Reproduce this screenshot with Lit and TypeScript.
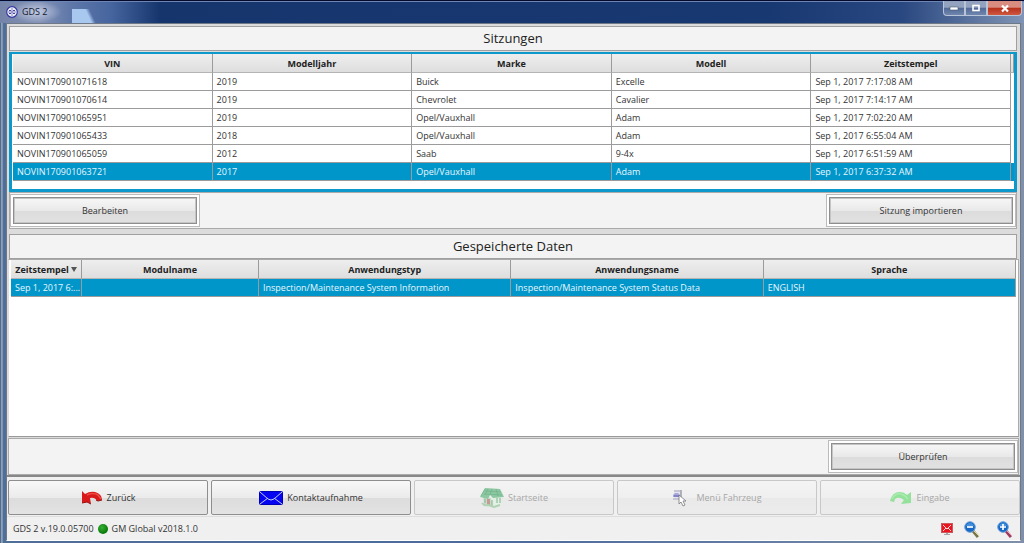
import { LitElement, html, css, svg } from "lit";
import { customElement } from "lit/decorators.js";
import { classMap } from "lit/directives/class-map.js";

const sessions = [
  ["NOVIN170901071618", "2019", "Buick", "Excelle", "Sep 1, 2017 7:17:08 AM"],
  ["NOVIN170901070614", "2019", "Chevrolet", "Cavalier", "Sep 1, 2017 7:14:17 AM"],
  ["NOVIN170901065951", "2019", "Opel/Vauxhall", "Adam", "Sep 1, 2017 7:02:20 AM"],
  ["NOVIN170901065433", "2018", "Opel/Vauxhall", "Adam", "Sep 1, 2017 6:55:04 AM"],
  ["NOVIN170901065059", "2012", "Saab", "9-4x", "Sep 1, 2017 6:51:59 AM"],
  ["NOVIN170901063721", "2017", "Opel/Vauxhall", "Adam", "Sep 1, 2017 6:37:32 AM"],
];
const sessionHeads = ["VIN", "Modelljahr", "Marke", "Modell", "Zeitstempel"];
const dataHeads = ["Modulname", "Anwendungstyp", "Anwendungsname", "Sprache"];

const backIcon = svg`<svg width="22" height="14" viewBox="0 0 22 14"><path d="M1 0L4 3Q9 0 14 1Q21 3 21 9L16 10Q14 6 9 7L10 13L6 11L1 12Z" fill="#d8191c"/><path d="M6 4Q12 1 17 4L20 8" fill="none" stroke="#ee4a42" stroke-width="1.5"/><path d="M1 12L6 11L10 13M15 9L17 10L21 9" fill="none" stroke="#971012"/></svg>`;
const mailIcon = svg`<svg width="24" height="14" viewBox="0 0 24 14"><rect x=".5" y=".5" width="23" height="13" rx="1" fill="#0505f2" stroke="#0000b4"/><path d="M1 1L9 8Q12 10 15 8L23 1M1 13L9 7M23 13L15 7" fill="none" stroke="#c3cdfc"/></svg>`;
const homeIcon = svg`<svg width="24" height="22" viewBox="0 0 24 22"><path d="M3 9L11 11L13 19L4 17Z" fill="#c9d9cc"/><path d="M11 11L21 8L22 17L13 20Z" fill="#e4f0e4"/><path d="M0 10L5 1L20 2L24 10L13 11L10 8L8 12Z" fill="#8cc8a1"/><path d="M5 2L1 9M8 2L5 8M12 2L10 7M16 2L18 9M5 4L21 5M4 7L22 8" stroke="#71b28a" stroke-width=".7"/><path d="M7 12H10V18H7Z" fill="#c69c92"/><path d="M5 12V16M12 13V19M17 11V16M20 11V16" stroke="#8dbb9d" stroke-width="1.2"/><path d="M2 16Q4 19 8 18L14 20L20 18" stroke="#b0d3b3" stroke-width="2" fill="none"/></svg>`;
const menuIcon = svg`<svg width="16" height="18" viewBox="0 0 16 18"><path d="M2 1H9V10H2Z" fill="#e5e5ed"/><path d="M2 2H8M1 10H7" stroke="#a4a4ba"/><path d="M9 1V9" stroke="#777784"/><path d="M1 6L3 4H6L8 6V8H1Z" fill="#a8a8dc"/><path d="M2 7H8" stroke="#5f5fb8"/><path d="M7 6V15L9 13L11 17L13 16L11 12H14Z" fill="#fff" stroke="#77777c" stroke-width=".8"/></svg>`;
const enterIcon = svg`<svg width="22" height="14" viewBox="0 0 22 14"><path d="M0 10Q2 1 10 1Q14 1 17 4L21 1V12L11 13L14 9Q9 5 5 8L4 11Z" fill="#93e19a"/><path d="M2 8Q5 2 11 3Q15 4 18 8" fill="none" stroke="#a9edae" stroke-width="1.5"/></svg>`;
const logo = svg`<svg width="12" height="12" viewBox="0 0 12 12"><circle cx="6" cy="6" r="5.3" fill="#f0f0fb" stroke="#3737a0" stroke-width="1.2"/><path d="M2 6H10M6 2V10" stroke="#6a6ab4" stroke-width=".8"/><path d="M3 4H5V5H3ZM7 4H9V5H7ZM3 7H5V8H3ZM7 7H9V8H7Z" fill="#45459c"/></svg>`;
const monitorIcon = svg`<svg width="12" height="13" viewBox="0 0 12 13"><rect x=".5" y=".5" width="11" height="9" fill="#e9151f" stroke="#c85a5f"/><path d="M2 2L6 6L10 2M2 8L5 5M10 8L7 5" fill="none" stroke="#ffd4d4"/><path d="M5 10H7V11H9V12H3V11H5Z" fill="#a5a5a5"/></svg>`;
const lens = (plus: boolean) => svg`<svg width="16" height="17" viewBox="0 0 16 17"><path d="M9 10L14 16" stroke="${plus ? "#9d3c5c" : "#77764a"}" stroke-width="3"/><path d="M10 10L15 15" stroke="${plus ? "#e6a2bb" : "#d9d79a"}"/><circle cx="6" cy="6" r="5.3" fill="#1768c4" stroke="#6b9fdb"/><path d="M2 5Q3 2 6 2Q9 2 10 5Z" fill="#438fdd"/><path d="M3 6H9${plus ? "M6 3V9" : ""}" stroke="#fff" stroke-width="1.7"/></svg>`;

const actions = [
  { label: "Zurück", icon: backIcon, off: false },
  { label: "Kontaktaufnahme", icon: mailIcon, off: false },
  { label: "Startseite", icon: homeIcon, off: true },
  { label: "Menü Fahrzeug", icon: menuIcon, off: true },
  { label: "Eingabe", icon: enterIcon, off: true },
];

@customElement("app-root")
export class AppRoot extends LitElement {
  static styles = css`
    :host {
      display: flex;
      flex-direction: column;
      box-sizing: border-box;
      height: 100vh;
      padding: 0 3px 2px 6px;
      background: linear-gradient(90deg, #39506f 0, #a9bcd4 2px, #4f6f98 3px, #4a6c9c 50%, #8090aa 100%);
      font: 9px/12px "Open Sans", "Noto Sans", sans-serif;
      color: #333;
    }
    * { box-sizing: border-box; }
    svg { display: block; flex: none; }
    button { font: inherit; color: inherit; margin: 0; }
    .titlebar {
      flex: none;
      height: 23px;
      margin: 0 -3px 0 -6px;
      padding: 1px 2px 0 6px;
      display: flex;
      justify-content: space-between;
      background:
        linear-gradient(#05092c 0 1px, #6d86b4 1px 2px, transparent 2px),
        radial-gradient(ellipse at center, #c3cae4 0, transparent 70%) 10px 1px / 52px 22px no-repeat,
        linear-gradient(245deg, transparent 6px, #a9c8f0 10px) 72px 9px / 24px 14px no-repeat,
        linear-gradient(90deg, #7484a8 0, #8291b5 40px, #5f78a9 70px, #47659f 110px, #17356d 160px, #183872 75%, #294780 88%, #7f94b6 100%);
    }
    .brand { display: flex; align-items: center; gap: 4px; color: #10182c; }
    .brand h1 { margin: 0; font: inherit; }
    .winbuttons { display: flex; height: 15px; }
    .winbuttons button {
      width: 22px;
      padding: 0;
      display: grid;
      place-items: center;
      border: 1px solid #b8c4d8;
      border-top: 0;
      background: linear-gradient(#93a3bf 0 45%, #526a96 50%, #6f86ae);
    }
    .winbuttons .close { width: 35px; border-radius: 0 0 4px 0; background: linear-gradient(#d98d80 0 45%, #b7301c 50%, #cf5840); }
    .winbuttons .min { border-radius: 0 0 0 4px; }
    .client {
      flex: 1;
      min-height: 0;
      display: flex;
      flex-direction: column;
      background: #f0f0f0;
      border: 1px solid #6e7886;
      border-bottom-color: #fff;
    }
    .frame {
      flex: 1;
      min-height: 0;
      display: flex;
      flex-direction: column;
      padding: 2px 3px 0 2px;
      background: #dcdcdc;
      border-bottom: 1px solid #888;
    }
    .heading {
      flex: none;
      height: 25px;
      margin: 0 0 1px;
      border: 1px solid #a0a0a0;
      background: #f3f3f3;
      text-align: center;
      font-size: 13px;
      line-height: 23px;
      font-weight: 400;
      color: #222;
    }
    .heading.second { margin: 5px 0 0; }
    .sessions { flex: none; border: 3px solid #0c98cb; border-top-width: 2px; background: #fff; padding: 0 0 8px 1px; }
    .saved { flex: 1; min-height: 0; margin: 0 -2px 0 -1px; background: #fff; border: 1px solid #aaa; border-left-color: #ddd; border-bottom: 1px solid #999; padding: 0 2px; }
    table { width: 100%; table-layout: fixed; border-collapse: separate; border-spacing: 0; }
    th, td { height: 18px; padding: 0 4px; border: 0 solid #9b9b9b; border-width: 0 1px 1px 0; white-space: nowrap; text-align: left; }
    th { height: 19px; padding: 2px 4px 0; text-align: center; color: #222; background: linear-gradient(#eee, #dedede); border-bottom-color: #b4b4b4; }
    .tail { width: 3px; padding: 0; }
    td.tail { border-color: transparent; }
    .picked td { background: #0096c9; color: #e8f7ff; }
    .stamp { width: 71px; padding: 0 0 0 4px; }
    th.stamp { padding: 2px 3px 0; }
    .modul { width: 177px; }
    .stamp .sort { display: inline-block; margin-left: 2px; border: 3px solid transparent; border-top: 5px solid #555; border-bottom: 0; vertical-align: 1px; }
    .bar { flex: none; height: 37px; display: flex; justify-content: space-between; border: 1px solid #aaa; background: #f3f3f3; padding: 1px 0; }
    .bar.end { justify-content: flex-end; margin: 1px -2px 0 -1px; }
    .slot { width: 190px; padding: 2px; border: 1px solid #bbb; background: #fff; display: flex; }
    .push { flex: 1; border: 1px solid #8e8e8e; box-shadow: inset 0 0 0 1px #c5c5c5; background: linear-gradient(#f7f7f7, #e9e9e9 50%, #dcdcdc 51%, #e1e1e1); }
    .actions { flex: none; display: grid; grid-template-columns: repeat(5, 1fr); gap: 3px; height: 41px; padding: 3px 0 1px 1px; border-top: 1px solid #888; border-bottom: 1px solid #ddd; }
    .actions button {
      display: flex;
      align-items: center;
      justify-content: center;
      gap: 4px;
      padding: 0;
      border: 1px solid #8e8e8e;
      border-radius: 2px;
      background: linear-gradient(#f8f8f8, #ebebeb 50%, #dcdcdc 51%, #e3e3e3);
    }
    .actions button:disabled { color: #a6a6a6; border-color: #c8c8c8; background: linear-gradient(#f4f4f4, #efefef 50%, #e9e9e9 51%, #ececec); }
    .actions button:nth-child(4) { gap: 8px; }
    .status { flex: none; height: 23px; display: flex; align-items: center; gap: 4px; padding: 1px 7px 0 6px; }
    .led { width: 10px; height: 10px; border-radius: 50%; background: radial-gradient(circle at 40% 35%, #35b035, #087808 70%); }
    .tools { margin-left: auto; display: flex; align-items: center; }
    .tools button { border: 0; padding: 0; background: none; }
    .tools .minus { margin: 0 17px 0 11px; }
  `;

  render() {
    return html`
      <header class="titlebar">
        <div class="brand">${logo}<h1>GDS 2</h1></div>
        <div class="winbuttons">
          <button class="min" aria-label="Minimieren"><svg width="10" height="8"><rect x="1" y="3" width="8" height="3" fill="#fff" stroke="#4c5a74" stroke-width=".6"/></svg></button>
          <button aria-label="Maximieren"><svg width="10" height="8"><rect x="2" y="1.5" width="6" height="5" fill="none" stroke="#fff" stroke-width="1.6"/></svg></button>
          <button class="close" aria-label="Schließen"><svg width="10" height="9"><path d="M2 1.5L8 7.5M8 1.5L2 7.5" stroke="#fff" stroke-width="2.2"/></svg></button>
        </div>
      </header>
      <main class="client">
        <div class="frame">
          <h2 class="heading">Sitzungen</h2>
          <div class="sessions">
            <table aria-label="Sitzungen">
              <thead><tr>${sessionHeads.map((h) => html`<th>${h}</th>`)}<th class="tail"></th></tr></thead>
              <tbody>
                ${sessions.map((row, i) => html`<tr class=${classMap({ picked: i === sessions.length - 1 })}>${row.map((c) => html`<td>${c}</td>`)}<td class="tail"></td></tr>`)}
              </tbody>
            </table>
          </div>
          <div class="bar">
            <div class="slot"><button class="push">Bearbeiten</button></div>
            <div class="slot"><button class="push">Sitzung importieren</button></div>
          </div>
          <h2 class="heading second">Gespeicherte Daten</h2>
          <div class="saved">
            <table aria-label="Gespeicherte Daten">
              <thead><tr>
                <th class="stamp" aria-sort="descending">Zeitstempel<span class="sort"></span></th>
                ${dataHeads.map((h, i) => html`<th class=${classMap({ modul: i === 0 })}>${h}</th>`)}
              </tr></thead>
              <tbody><tr class="picked">
                <td class="stamp">Sep 1, 2017 6:...</td><td></td>
                <td>Inspection/Maintenance System Information</td>
                <td>Inspection/Maintenance System Status Data</td><td>ENGLISH</td>
              </tr></tbody>
            </table>
          </div>
          <div class="bar end"><div class="slot"><button class="push">Überprüfen</button></div></div>
        </div>
        <nav class="actions">
          ${actions.map((a) => html`<button ?disabled=${a.off}>${a.icon}<span>${a.label}</span></button>`)}
        </nav>
        <footer class="status">
          <span>GDS 2 v.19.0.05700</span><span class="led"></span><span>GM Global v2018.1.0</span>
          <div class="tools">
            ${monitorIcon}
            <button class="minus" aria-label="Verkleinern">${lens(false)}</button>
            <button aria-label="Vergrößern">${lens(true)}</button>
          </div>
        </footer>
      </main>
    `;
  }
}
